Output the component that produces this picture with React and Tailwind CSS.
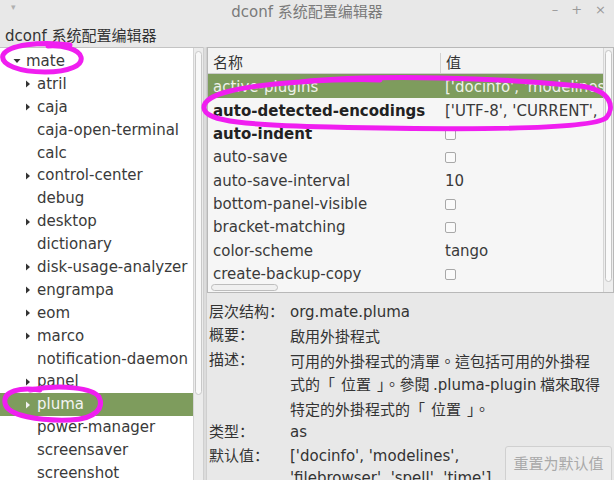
const font = { fontFamily: '"DejaVu Sans", "Noto Sans CJK SC", sans-serif' }
const tcFont = { fontFamily: '"Noto Sans CJK TC", sans-serif' }
const latin = { fontFamily: '"DejaVu Sans", sans-serif' }

const tree = [
  ['atril', true],
  ['caja', true],
  ['caja-open-terminal', false],
  ['calc', false],
  ['control-center', true],
  ['debug', false],
  ['desktop', true],
  ['dictionary', false],
  ['disk-usage-analyzer', true],
  ['engrampa', true],
  ['eom', true],
  ['marco', true],
  ['notification-daemon', false],
  ['panel', true],
  ['pluma', true],
  ['power-manager', false],
  ['screensaver', false],
  ['screenshot', false],
]

const keys = [
  { name: 'active-plugins', value: "['docinfo', 'modelines', 'filebrowser']", selected: true },
  { name: 'auto-detected-encodings', value: "['UTF-8', 'CURRENT', 'ISO-8859-15']", bold: true },
  { name: 'auto-indent', check: true, bold: true },
  { name: 'auto-save', check: true },
  { name: 'auto-save-interval', value: '10' },
  { name: 'bottom-panel-visible', check: true },
  { name: 'bracket-matching', check: true },
  { name: 'color-scheme', value: 'tango' },
  { name: 'create-backup-copy', check: true },
]

function Arrow({ down, light }) {
  const fill = light ? '#f2f2f2' : '#333333'
  return down ? (
    <svg width="8" height="8" viewBox="0 0 8 8" className="shrink-0">
      <path d="M0.5 2 L7.5 2 L4 6 Z" fill={fill} />
    </svg>
  ) : (
    <svg width="8" height="8" viewBox="0 0 8 8" className="shrink-0">
      <path d="M2 0.5 L6 4 L2 7.5 Z" fill={fill} />
    </svg>
  )
}

function Check() {
  return <span className="block w-[11px] h-[11px] rounded-[2px] border border-[#a8a8a8] bg-[#fafafa]" />
}

function Quoted({ children }) {
  return (
    <>
      <span className="mr-[6px]">「</span>
      {children}
      <span className="ml-[6px]">」</span>
    </>
  )
}

function InfoRow({ label, children, tc }) {
  return (
    <div className="flex h-[23.3px] items-center shrink-0">
      <div className="w-[81px] shrink-0">{label}</div>
      <div style={tc ? tcFont : undefined}>{children}</div>
    </div>
  )
}

export default function App() {
  return (
    <div className="relative w-[614px] h-[480px] overflow-hidden bg-[#e8e8e8] text-[15px] text-[#3a3a3a] leading-none" style={font}>
      {/* title bar */}
      <div className="relative h-[24px] flex items-center justify-center text-[#7a7a7a]">
        <span className="absolute left-[11px] top-[3px] text-[9px] text-[#b0b0b0]">▾</span>
        <span>dconf 系统配置编辑器</span>
        <div className="absolute right-[8px] top-[3px] flex gap-[13px] text-[13px] text-[#9a9a9a]">
          <span>–</span>
          <span>+</span>
          <span>×</span>
        </div>
      </div>
      <div className="h-[23px] pl-[5px] pt-[2px] flex items-center text-[#333]">dconf 系统配置编辑器</div>

      <div className="flex h-[433px]">
        {/* left tree */}
        <div className="flex w-[203px] border-t border-[#c4c4c4] bg-white">
          <div className="w-[193px] flex flex-col pt-[2px]">
            <div className="h-[22.9px] flex items-center pl-[13px] gap-[5px] shrink-0">
              <Arrow down />
              <span>mate</span>
            </div>
            {tree.map(([name, arrow]) => {
              const sel = name === 'pluma'
              return (
                <div key={name} className={`h-[22.9px] flex items-center pl-[24px] gap-[5px] shrink-0 ${sel ? 'bg-[#7e9c5d] text-[#f4f4f4]' : ''}`}>
                  {arrow ? <Arrow light={sel} /> : <span className="w-[8px]" />}
                  <span>{name}</span>
                </div>
              )
            })}
          </div>
          <div className="w-[10px] bg-[#ececec] border-l border-[#d4d4d4] pt-[3px] pb-[85px] px-[1px]">
            <div className="h-full rounded-[4px] bg-[#f8f8f8] border border-[#c8c8c8]" />
          </div>
        </div>

        {/* pane handle */}
        <div className="w-[4px] bg-[#dcdcdc] border-x border-[#cfcfcf]" />

        {/* right side */}
        <div className="flex-1 min-w-0 flex flex-col">
          <div className="h-[246px] shrink-0 flex border border-[#b8b8b8] bg-[#f6f6f6]">
            <div className="flex-1 flex flex-col min-w-0">
              <div className="h-[27px] flex border-b border-[#cdcdcd] bg-[#f3f3f3] text-[#333] pt-[5px]">
                <div className="w-[233px] flex items-center pl-[5px] border-r border-[#d2d2d2]">名称</div>
                <div className="flex-1 flex items-center pl-[5px]">值</div>
              </div>
              {keys.map((k) => (
                <div key={k.name} className={`h-[23.3px] flex items-center shrink-0 pt-[4px] ${k.selected ? 'bg-[#7e9c5d] text-[#eef2ea]' : ''}`}>
                  <div className={`w-[233px] shrink-0 pl-[5px] whitespace-nowrap ${k.bold ? 'font-bold text-[#222]' : ''}`}>{k.name}</div>
                  <div className="flex-1 pl-[4px] whitespace-nowrap overflow-hidden">
                    {k.check ? <Check /> : k.value}
                  </div>
                </div>
              ))}
              <div className="flex-1 flex items-end px-[3px] pb-[1px]">
                <div className="w-[67px] h-[7px] rounded-full bg-[#f0f0f0] border border-[#bdbdbd]" />
              </div>
            </div>
            <div className="w-[10px] bg-[#eeeeee] border-l border-[#d6d6d6] px-[1px] pt-[2px] pb-[10px]">
              <div className="h-full rounded-[4px] bg-[#fafafa] border border-[#c4c4c4]" />
            </div>
          </div>

          {/* detail pane */}
          <div className="flex-1 flex flex-col pt-[8px] pl-[2px] text-[#333]">
            <InfoRow label="层次结构：">org.mate.pluma</InfoRow>
            <InfoRow label="概要：" tc>啟用外掛程式</InfoRow>
            <div className="flex shrink-0">
              <div className="w-[81px] shrink-0 pt-[5px]">描述：</div>
              <div className="flex flex-col leading-[23.3px] pt-[1px] whitespace-nowrap" style={tcFont}>
                <span>可用的外掛程式的清單。這包括可用的外掛程</span>
                <span>
                  式的<Quoted>位置</Quoted>。參閱 <span style={latin}>.pluma-plugin</span> 檔來取得
                </span>
                <span>
                  特定的外掛程式的<Quoted>位置</Quoted>。
                </span>
              </div>
            </div>
            <InfoRow label="类型：">as</InfoRow>
            <div className="flex shrink-0 pr-[2px]">
              <div className="w-[81px] shrink-0 pt-[5px]">默认值：</div>
              <div className="flex flex-col leading-[22px] pt-[1px] whitespace-nowrap">
                <span>['docinfo', 'modelines',</span>
                <span>'filebrowser', 'spell', 'time']</span>
              </div>
              <div className="ml-auto mt-[2px] w-[107px] h-[38px] shrink-0 flex items-center justify-center rounded-[3px] border border-[#d0d0d0] bg-[#ececec] text-[#a9a9a9]">
                重置为默认值
              </div>
            </div>
          </div>
        </div>
      </div>

      {/* hand-drawn annotations */}
      <svg className="absolute inset-0 pointer-events-none" width="614" height="480" viewBox="0 0 614 480">
        <g fill="none" stroke="#f01ef0" strokeWidth="5" strokeLinecap="round">
          <path d="M70 45 C40 41 8 45 3 55 C0 65 20 72 45 72 C70 72 83 65 81 57 C79 49 62 45 48 46" />
          <path d="M300 82 C380 74 500 78 580 86 C612 90 615 108 606 118 C590 130 460 130 330 127 C250 125 205 122 204 108 C203 94 240 86 300 82 C330 80 360 79 380 80" />
          <path d="M40 390 C20 387 3 391 5 403 C7 416 40 421 70 420 C97 419 104 407 99 397 C93 388 60 384 30 390" />
        </g>
      </svg>
    </div>
  )
}
